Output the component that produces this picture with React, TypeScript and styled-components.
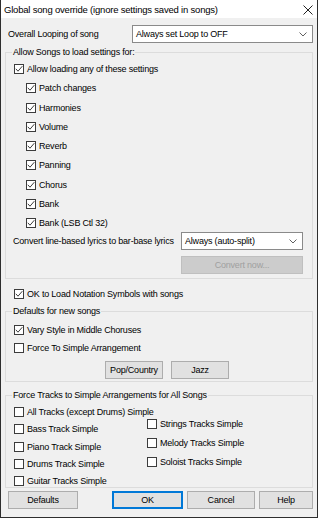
import React from 'react';
import styled, { createGlobalStyle } from 'styled-components';

const Global = createGlobalStyle`
  html, body { margin: 0; padding: 0; background: #ffffff; }
  body {
    font-family: "Liberation Sans", Arial, sans-serif;
    font-size: 9px;
    letter-spacing: -0.2px;
    color: #000;
  }
  * { box-sizing: border-box; }
`;

const Window = styled.div`
  width: 318px;
  height: 518px;
  background: #f0f0f0;
  border: 1px solid #2e2e2e;
  border-top: none;
  display: flex;
  flex-direction: column;
`;

const TitleBar = styled.div`
  height: 18px;
  background: #ffffff;
  display: flex;
  align-items: center;
  justify-content: space-between;
  padding: 1px 4px 0 3px;
`;

const TitleText = styled.span`
  font-size: 9.5px;
`;

const Content = styled.div`
  display: flex;
  flex-direction: column;
  padding: 0 4px;
`;

const LoopRow = styled.div`
  margin-top: 7px;
  height: 18px;
  display: flex;
  align-items: center;
  justify-content: space-between;
  padding-left: 3px;
`;

const Select = styled.div<{ $w: number }>`
  width: ${p => p.$w}px;
  height: 18px;
  background: #ffffff;
  border: 1px solid #8a8a8a;
  display: flex;
  align-items: center;
  justify-content: space-between;
  padding: 0 5px 0 3px;
`;

const Group = styled.fieldset<{ $mt: number; $pt: number; $pb: number }>`
  margin: ${p => p.$mt}px 0 0 0;
  padding: ${p => p.$pt}px 0 ${p => p.$pb}px 0;
  border: 1px solid #dcdcdc;
  min-width: 0;
`;

const Legend = styled.legend`
  margin-left: 6px;
  padding: 0 1px;
  line-height: 12px;
  height: 12px;
`;

const List = styled.div<{ $gap: number; $pl: number; $pt?: number }>`
  display: flex;
  flex-direction: column;
  gap: ${p => p.$gap}px;
  padding-left: ${p => p.$pl}px;
  padding-top: ${p => p.$pt ?? 0}px;
`;

const CheckRow = styled.label<{ $indent?: number }>`
  height: 12px;
  display: flex;
  align-items: center;
  padding-left: ${p => p.$indent ?? 0}px;
  white-space: nowrap;
`;

const Box = styled.span`
  width: 10px;
  height: 10px;
  border: 1px solid #3c3c3c;
  background: #ffffff;
  margin-right: 3px;
  display: flex;
  align-items: center;
  justify-content: center;
  flex: none;
`;

const LyricsRow = styled.div`
  margin-top: 3px;
  height: 18px;
  display: flex;
  align-items: center;
  justify-content: space-between;
  padding: 0 9px 0 7px;
`;

const RightRow = styled.div<{ $mt: number }>`
  margin-top: ${p => p.$mt}px;
  display: flex;
  justify-content: flex-end;
  padding-right: 9px;
`;

const Button = styled.button<{ $w: number; $primary?: boolean }>`
  width: ${p => p.$w}px;
  height: 18px;
  font-family: inherit;
  font-size: 9px;
  letter-spacing: -0.2px;
  color: ${p => (p.disabled ? '#a0a0a0' : '#000')};
  background: ${p => (p.disabled ? '#cccccc' : '#e1e1e1')};
  border: ${p => (p.$primary ? '2px solid #0078d7' : p.disabled ? '1px solid #bfbfbf' : '1px solid #adadad')};
  padding: 0;
  margin: 0;
  flex: none;
`;

const OkRow = styled.div`
  margin-top: 9px;
  padding-left: 9px;
`;

const ButtonPair = styled.div`
  margin-top: 7px;
  display: flex;
  gap: 8px;
  padding-left: 99px;
`;

const Columns = styled.div`
  display: grid;
  grid-template-columns: 133px 1fr;
  padding-left: 8px;
`;

const Footer = styled.div`
  margin-top: 3px;
  display: flex;
  justify-content: space-between;
  padding-left: 3px;
`;

const FooterRight = styled.div`
  display: flex;
  gap: 4px;
`;

const Chevron = () => (
  <svg width="8" height="5" viewBox="0 0 8 5">
    <polyline points="0.5,0.5 4,4 7.5,0.5" fill="none" stroke="#606060" strokeWidth="1" />
  </svg>
);

const CloseIcon = () => (
  <svg width="10" height="10" viewBox="0 0 10 10">
    <path d="M0.5 0.5 L9.5 9.5 M9.5 0.5 L0.5 9.5" stroke="#222" strokeWidth="1" />
  </svg>
);

const Check = ({ checked, children, indent }: { checked?: boolean; children: React.ReactNode; indent?: number }) => (
  <CheckRow $indent={indent}>
    <Box>
      {checked && (
        <svg width="8" height="8" viewBox="0 0 8 8">
          <polyline points="0.8,3.8 3,6.2 7.3,1.2" fill="none" stroke="#3c3c3c" strokeWidth="1" />
        </svg>
      )}
    </Box>
    <span>{children}</span>
  </CheckRow>
);

const settings = [
  'Patch changes',
  'Harmonies',
  'Volume',
  'Reverb',
  'Panning',
  'Chorus',
  'Bank',
  'Bank (LSB Ctl 32)',
];

export default function App() {
  return (
    <>
      <Global />
      <Window>
        <TitleBar>
          <TitleText>Global song override (ignore settings saved in songs)</TitleText>
          <CloseIcon />
        </TitleBar>
        <Content>
          <LoopRow>
            <span>Overall Looping of song</span>
            <Select $w={181}>
              <span>Always set Loop to OFF</span>
              <Chevron />
            </Select>
          </LoopRow>

          <Group $mt={3} $pt={5} $pb={4}>
            <Legend>Allow Songs to load settings for:</Legend>
            <List $gap={7.25} $pl={8}>
              <Check checked>Allow loading any of these settings</Check>
              {settings.map(s => (
                <Check key={s} checked indent={12}>
                  {s}
                </Check>
              ))}
            </List>
            <LyricsRow>
              <span>Convert line-based lyrics to bar-base lyrics</span>
              <Select $w={122}>
                <span>Always (auto-split)</span>
                <Chevron />
              </Select>
            </LyricsRow>
            <RightRow $mt={6}>
              <Button $w={122} disabled>
                Convert now...
              </Button>
            </RightRow>
          </Group>

          <OkRow>
            <Check checked>OK to Load Notation Symbols with songs</Check>
          </OkRow>

          <Group $mt={5} $pt={7} $pb={2}>
            <Legend>Defaults for new songs</Legend>
            <List $gap={6} $pl={8}>
              <Check checked>Vary Style in Middle Choruses</Check>
              <Check>Force To Simple Arrangement</Check>
            </List>
            <ButtonPair>
              <Button $w={58}>Pop/Country</Button>
              <Button $w={58}>Jazz</Button>
            </ButtonPair>
          </Group>

          <Group $mt={7} $pt={5} $pb={0}>
            <Legend>Force Tracks to Simple Arrangements for All Songs</Legend>
            <Columns>
              <List $gap={5.3} $pl={0}>
                <Check>All Tracks (except Drums) Simple</Check>
                <Check>Bass Track Simple</Check>
                <Check>Piano Track Simple</Check>
                <Check>Drums Track Simple</Check>
                <Check>Guitar Tracks Simple</Check>
              </List>
              <List $gap={7} $pl={0} $pt={12}>
                <Check>Strings Tracks Simple</Check>
                <Check>Melody Tracks Simple</Check>
                <Check>Soloist Tracks Simple</Check>
              </List>
            </Columns>
          </Group>

          <Footer>
            <Button $w={70}>Defaults</Button>
            <FooterRight>
              <Button $w={71} $primary>
                OK
              </Button>
              <Button $w={68}>Cancel</Button>
              <Button $w={54}>Help</Button>
            </FooterRight>
          </Footer>
        </Content>
      </Window>
    </>
  );
}
